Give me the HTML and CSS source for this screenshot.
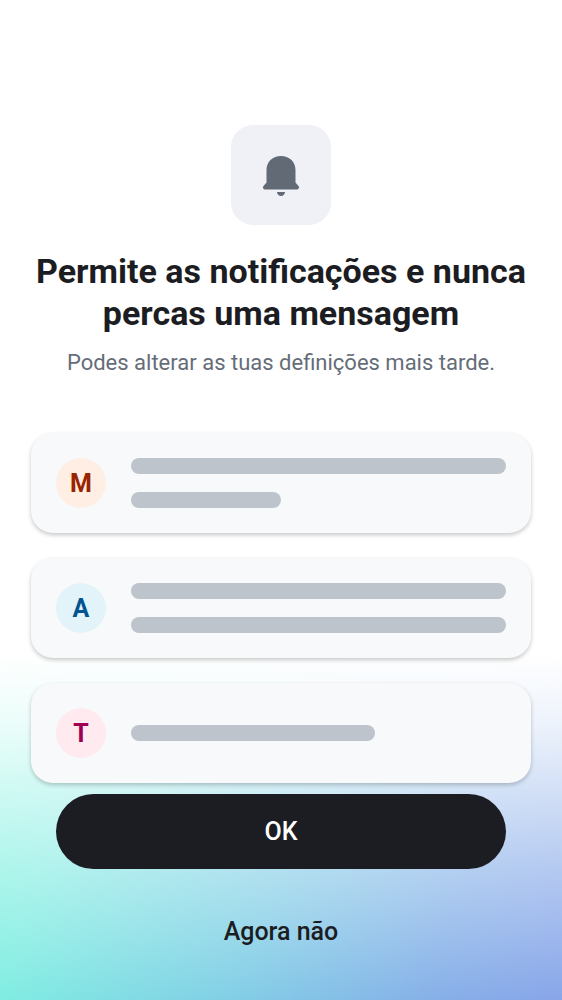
FILE: index.html
```html
<!DOCTYPE html>
<html lang="pt">
<head>
<meta charset="utf-8">
<meta name="viewport" content="width=device-width, initial-scale=1">
<title>Notificações</title>
<link rel="stylesheet" href="styles.css">
</head>
<body>
<main class="screen">
  <header class="intro">
    <div class="bell-tile">
      <svg class="bell" viewBox="0 0 40 44" aria-hidden="true">
        <path d="M5.5 17C5.500 8.500 12 3 20 3s14.500 5.500 14.500 14v12.500l3 3.500c1.200 1.500.2 3.500-1.700 3.500H4.200c-1.900 0-2.900-2-1.700-3.500l3-3.500z"/>
        <path d="M16 39h8c0 2-1.800 4-4 4s-4-2-4-4z"/>
      </svg>
    </div>
    <h1 class="title">Permite as notificações e nunca percas uma mensagem</h1>
    <p class="subtitle">Podes alterar as tuas definições mais tarde.</p>
  </header>
  <div class="previews" aria-hidden="true">
    <div class="card">
      <span class="avatar avatar-orange">M</span>
      <div class="lines"><span class="line"></span><span class="line line-short"></span></div>
    </div>
    <div class="card">
      <span class="avatar avatar-blue">A</span>
      <div class="lines"><span class="line"></span><span class="line"></span></div>
    </div>
    <div class="card">
      <span class="avatar avatar-pink">T</span>
      <div class="lines"><span class="line line-medium"></span></div>
    </div>
  </div>
  <div class="actions">
    <button class="button button-primary" type="button">OK</button>
    <button class="button button-text" type="button">Agora não</button>
  </div>
</main>
</body>
</html>
```
FILE: styles.css
```css
* {
  box-sizing: border-box;
}

body {
  margin: 0;
  font-family: Roboto, "Liberation Sans", sans-serif;
  color: #1c1d22;
  background: #fff;
}

.screen {
  min-height: 100vh;
  padding: 125px 31px 31px;
  display: flex;
  flex-direction: column;
  background:
    linear-gradient(to bottom, #fff, rgba(255, 255, 255, 0.85) 20%, rgba(255, 255, 255, 0.6) 42%, rgba(255, 255, 255, 0.38) 62%, rgba(255, 255, 255, 0)) bottom / 100% 345px no-repeat,
    linear-gradient(105deg, #78f4dc, #80ece2 15%, #82cee6 50%, #86b0e8 80%, #88a5e9) bottom / 100% 345px no-repeat;
}

.intro {
  display: flex;
  flex-direction: column;
  align-items: center;
  text-align: center;
}

.bell-tile {
  width: 100px;
  height: 100px;
  border-radius: 22px;
  background: #f0f1f6;
  display: grid;
  place-items: center;
}

.bell {
  width: 40px;
  height: 44px;
  fill: #626a76;
}

.title {
  margin: 25px 0 0;
  font-size: 34px;
  line-height: 42px;
  font-weight: 700;
}

.subtitle {
  margin: 13px 0 0;
  font-size: 22px;
  line-height: 32px;
  color: #656d78;
}

.previews {
  margin-top: 54px;
  display: flex;
  flex-direction: column;
  gap: 25px;
}

.card {
  height: 100px;
  padding: 25px;
  display: flex;
  align-items: center;
  gap: 25px;
  border-radius: 22px;
  background: #f8f9fb;
  box-shadow: 0 2px 4px rgba(0, 0, 0, 0.22);
}

.avatar {
  width: 50px;
  height: 50px;
  flex: none;
  border-radius: 50%;
  display: grid;
  place-items: center;
  font-size: 25px;
  font-weight: 700;
}

.avatar-orange {
  background: #ffeee4;
  color: #982400;
}

.avatar-blue {
  background: #e2f4f9;
  color: #005490;
}

.avatar-pink {
  background: #ffeaef;
  color: #a00050;
}

.lines {
  flex: 1;
  display: grid;
  gap: 18px;
}

.line {
  height: 16px;
  border-radius: 8px;
  background: #bdc4cc;
}

.line-short {
  width: 40%;
}

.line-medium {
  width: 65%;
}

.actions {
  margin-top: 11px;
  padding: 0 25px;
  display: flex;
  flex-direction: column;
  gap: 25px;
}

.button {
  height: 75px;
  border: 0;
  border-radius: 38px;
  font: 500 25px/32px Roboto, "Liberation Sans", sans-serif;
  color: #1c1d22;
  background: none;
  cursor: pointer;
}

.button-primary {
  color: #fff;
  background: #1c1d22;
}
```
